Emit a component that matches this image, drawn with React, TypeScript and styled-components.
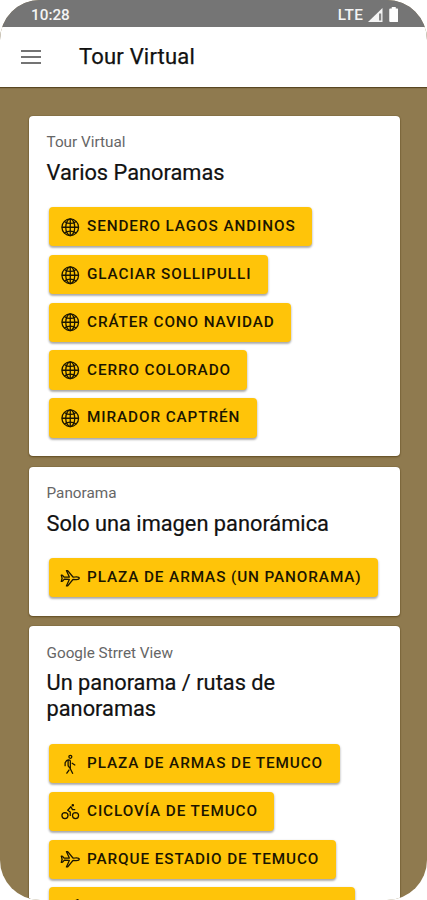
import React from "react";
import styled, { createGlobalStyle } from "styled-components";
import {
  IoAirplaneOutline,
  IoBicycleOutline,
  IoGlobeOutline,
  IoNavigateOutline,
  IoWalkOutline,
} from "react-icons/io5";
import type { IconType } from "react-icons";

const GlobalStyle = createGlobalStyle`
  *, *::before, *::after { box-sizing: border-box; }
  html, body { margin: 0; background: #fff; overflow: hidden; }
  body { font-family: Roboto, "Noto Sans", sans-serif; color: #111; }
`;

const Phone = styled.div`
  width: 427px;
  height: 900px;
  display: flex;
  flex-direction: column;
  overflow: hidden;
  border-radius: 40px;
  background: #8f7a4f;
`;

const StatusBar = styled.div`
  flex: none;
  height: 26.5px;
  padding: 3px 29px 0 31px;
  display: flex;
  align-items: center;
  background: #757575;
  color: #f4f4f4;
  font-size: 15.3px;
  font-weight: 500;
`;

const Network = styled.span`
  margin-left: auto;
  margin-right: 4px;
  letter-spacing: 0.5px;
`;

const SignalIcon = styled.svg`
  width: 15px;
  height: 14px;
  margin-right: 6px;
`;

const BatteryIcon = styled.svg`
  width: 9.5px;
  height: 15px;
`;

const Toolbar = styled.header`
  flex: none;
  height: 60.5px;
  padding-left: 21px;
  display: flex;
  align-items: center;
  background: #fff;
  box-shadow: 0 1px 1px rgba(60, 45, 10, 0.65);
  z-index: 1;
`;

const MenuButton = styled.button`
  display: flex;
  padding: 0;
  border: 0;
  background: none;
  color: #747474;
`;

const MenuIcon = styled.svg`
  width: 20px;
  height: 16px;
`;

const PageTitle = styled.h1`
  margin: 0 0 0 38px;
  font-size: 22px;
  font-weight: 400;
  line-height: 28px;
  letter-spacing: 0.2px;
  -webkit-text-stroke: 0.25px currentColor;
`;

const Content = styled.main`
  flex: 1;
  min-height: 0;
  overflow: hidden;
  padding: 28.5px 27px 0 28.5px;
  display: flex;
  flex-direction: column;
  gap: 10.5px;
`;

const Card = styled.section`
  flex: none;
  padding: 17.5px 18px 18.4px;
  border-radius: 4px;
  background: #fff;
  box-shadow: 0 1px 2px rgba(70, 48, 5, 0.6), 0 0 1px rgba(70, 48, 5, 0.7);
`;

const Subtitle = styled.p`
  margin: 0;
  font-size: 15.3px;
  line-height: 18px;
  color: #666;
`;

const CardTitle = styled.h2`
  margin: 8.5px 0 0;
  font-size: 21.8px;
  font-weight: 400;
  line-height: 26px;
  color: #111;
  -webkit-text-stroke: 0.2px currentColor;
`;

const Actions = styled.div`
  margin-top: 21.6px;
  padding-left: 2px;
  display: flex;
  flex-direction: column;
  align-items: flex-start;
  gap: 8.4px;
`;

const TourButton = styled.button<{ $width?: number }>`
  width: ${({ $width }) => ($width ? `${$width}px` : "auto")};
  height: 39.4px;
  padding: 0 16.5px 1px 11px;
  display: flex;
  align-items: center;
  gap: 7px;
  border: 0;
  border-radius: 4px;
  background: #ffc409;
  color: #1b1500;
  box-shadow: 0 2px 2px rgba(0, 0, 0, 0.22), 0 1px 3px rgba(0, 0, 0, 0.2);
  font-family: inherit;
  font-size: 15.3px;
  font-weight: 500;
  letter-spacing: 0.9px;
  text-transform: uppercase;
  white-space: nowrap;

  svg {
    flex: none;
    width: 20.5px;
    height: 20.5px;
    margin-top: 1.6px;
  }
`;

interface Action {
  label?: string;
  icon: IconType;
  width?: number;
}

interface Group {
  subtitle: string;
  title: string;
  actions: Action[];
}

const groups: Group[] = [
  {
    subtitle: "Tour Virtual",
    title: "Varios Panoramas",
    actions: [
      { label: "Sendero Lagos Andinos", icon: IoGlobeOutline },
      { label: "Glaciar Sollipulli", icon: IoGlobeOutline },
      { label: "Cráter Cono Navidad", icon: IoGlobeOutline },
      { label: "Cerro Colorado", icon: IoGlobeOutline },
      { label: "Mirador Captrén", icon: IoGlobeOutline },
    ],
  },
  {
    subtitle: "Panorama",
    title: "Solo una imagen panorámica",
    actions: [{ label: "Plaza de Armas (un panorama)", icon: IoAirplaneOutline }],
  },
  {
    subtitle: "Google Strret View",
    title: "Un panorama / rutas de panoramas",
    actions: [
      { label: "Plaza de Armas de Temuco", icon: IoWalkOutline },
      { label: "Ciclovía de Temuco", icon: IoBicycleOutline },
      { label: "Parque Estadio de Temuco", icon: IoAirplaneOutline },
      { icon: IoNavigateOutline, width: 306 },
    ],
  },
];

export default function App() {
  return (
    <>
      <GlobalStyle />
      <Phone>
        <StatusBar>
          <span>10:28</span>
          <Network>LTE</Network>
          <SignalIcon viewBox="0 0 15 14">
            <path d="M0 14 14.5 0V14Z" fill="#f4f4f4" />
            <path d="M11 5.5h2.2V12.5H11Z" fill="#858585" />
          </SignalIcon>
          <BatteryIcon viewBox="0 0 9 15">
            <path d="M2.5 0h4v1.6H8q1 0 1 1V14q0 1-1 1H1q-1 0-1-1V2.6q0-1 1-1h1.5Z" fill="#fff" />
          </BatteryIcon>
        </StatusBar>
        <Toolbar>
          <MenuButton aria-label="Menu">
            <MenuIcon viewBox="0 0 20 16">
              <path d="M0 2h20M0 8h20M0 14h20" stroke="currentColor" strokeWidth="2" />
            </MenuIcon>
          </MenuButton>
          <PageTitle>Tour Virtual</PageTitle>
        </Toolbar>
        <Content>
          {groups.map((group) => (
            <Card key={group.subtitle}>
              <Subtitle>{group.subtitle}</Subtitle>
              <CardTitle>{group.title}</CardTitle>
              <Actions>
                {group.actions.map(({ label, icon: Icon, width }, index) => (
                  <TourButton key={index} $width={width}>
                    <Icon />
                    {label}
                  </TourButton>
                ))}
              </Actions>
            </Card>
          ))}
        </Content>
      </Phone>
    </>
  );
}
